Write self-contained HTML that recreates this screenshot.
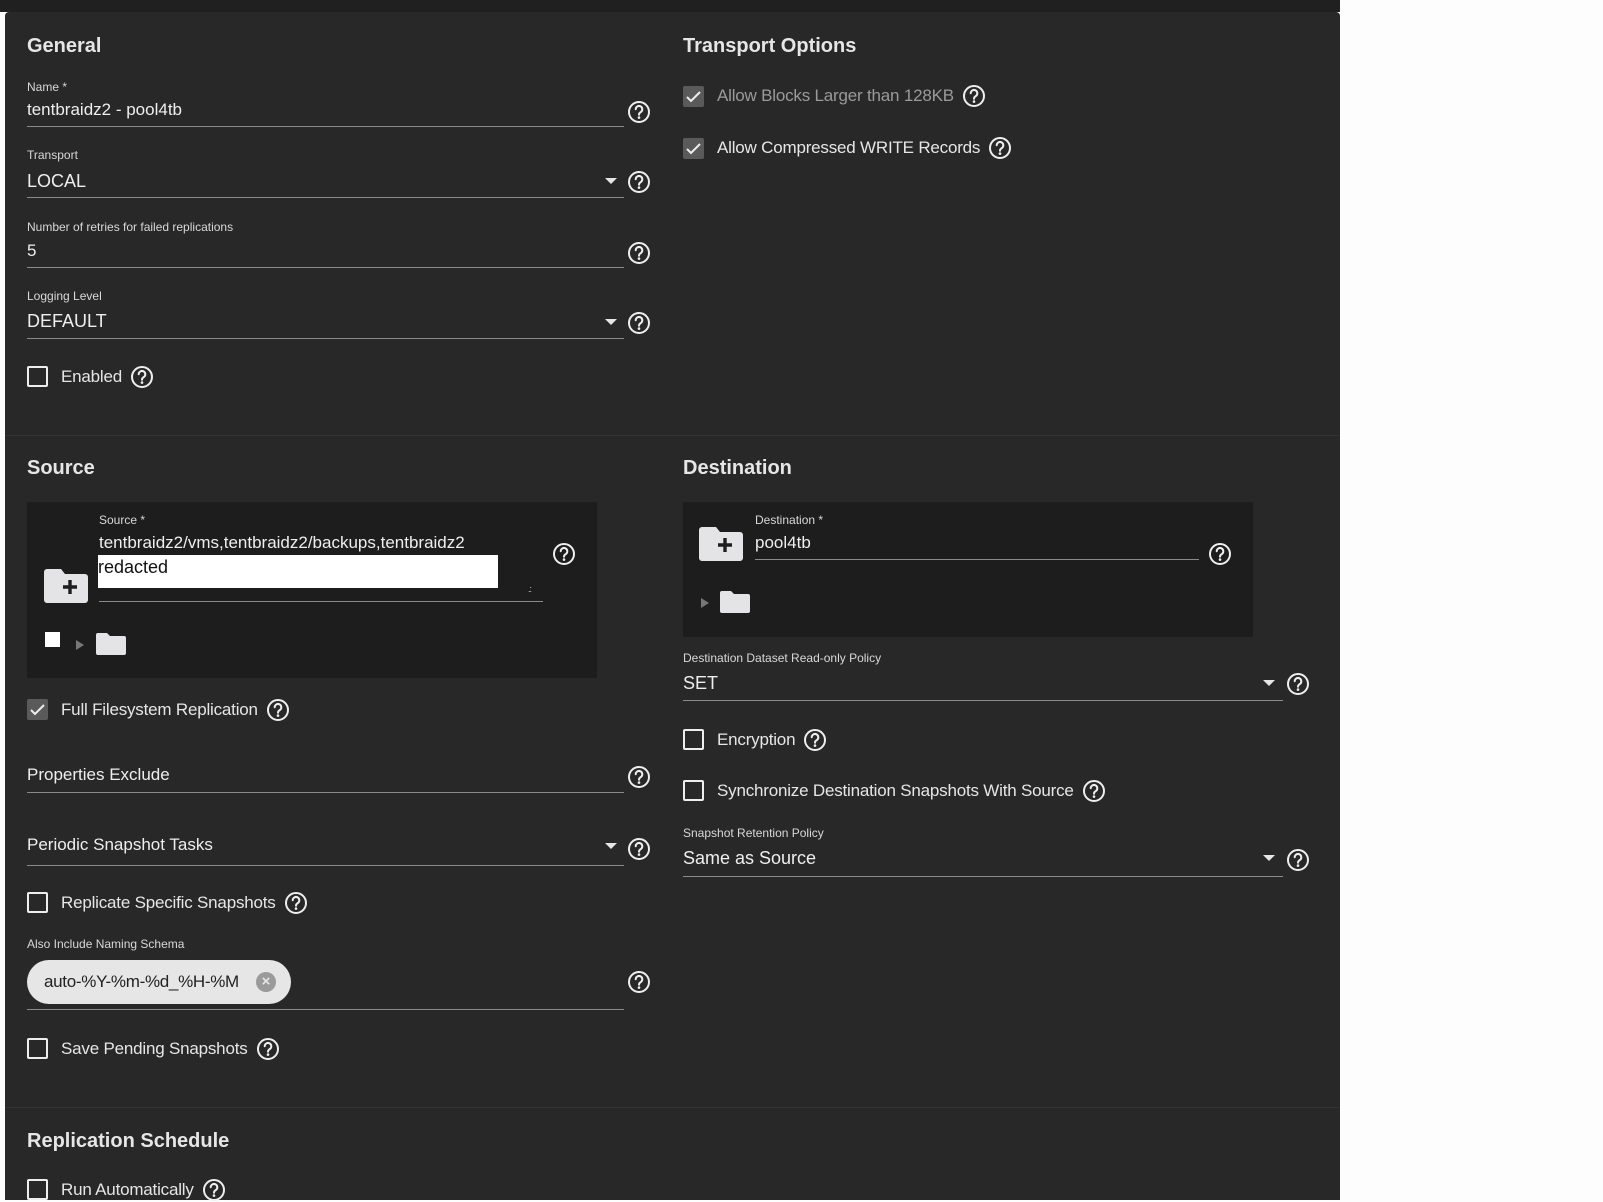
<!DOCTYPE html>
<html><head><meta charset="utf-8"><style>
*{margin:0;padding:0;box-sizing:border-box}
body{width:1603px;height:1200px;background:#fdfdfd;position:relative;overflow:hidden;font-family:"Liberation Sans",sans-serif;color:#e6e6e6}
.top{position:absolute;left:0;top:0;width:1340px;height:12px;background:#202020}
.card{position:absolute;left:5px;top:12px;width:1335px;height:1188px;background:#282828;border-radius:4px 4px 0 0}
.a{position:absolute;white-space:nowrap}
h2{position:absolute;font-size:20px;font-weight:bold;color:#e6e6e6;white-space:nowrap}
.lbl{position:absolute;font-size:12px;color:#d8d8d8;white-space:nowrap}
.val{position:absolute;font-size:17px;color:#eee;white-space:nowrap}
.line{position:absolute;height:1px;background:#8a8a8a}
.hr{position:absolute;height:1px;background:#333;left:5px;width:1335px}
.cb{position:absolute;width:21px;height:21px;border:2px solid #eee;border-radius:2px}
.cbc{position:absolute;width:21px;height:21px;background:#5a5a5a;border-radius:2px}
.cbt{position:absolute;font-size:17px;color:#e6e6e6;white-space:nowrap;display:flex;align-items:center;height:24px;letter-spacing:-0.2px}
.cbt svg{width:24px;height:24px;margin-left:8px}
.tri{position:absolute;width:0;height:0;border-left:6px solid transparent;border-right:6px solid transparent;border-top:6px solid #e6e6e6}
.box{position:absolute;background:#1d1d1d}
.h{position:absolute;width:24px;height:24px}
</style></head><body>
<svg width="0" height="0" style="position:absolute"><defs>
<symbol id="q" viewBox="0 0 24 24"><circle cx="12" cy="12" r="10" fill="none" stroke="#eee" stroke-width="2"/><path d="M8.7 9.3a3.3 3.3 0 1 1 5 2.8c-1 .6-1.7 1.2-1.7 2.6" fill="none" stroke="#eee" stroke-width="2" stroke-linecap="round"/><circle cx="12" cy="17.6" r="1.3" fill="#eee"/></symbol>
<symbol id="ck" viewBox="0 0 21 21"><path d="M4 11l4 4 9-9" fill="none" stroke="#eee" stroke-width="2"/></symbol>
<symbol id="fp" viewBox="0 0 44 34"><path d="M3 0h14l4 5h20a3 3 0 0 1 3 3v23a3 3 0 0 1-3 3H3a3 3 0 0 1-3-3V3a3 3 0 0 1 3-3z" fill="#e4e4e6"/><path d="M26 11v14M19 18h14" stroke="#1d1d1d" stroke-width="3.4"/></symbol>
<symbol id="f" viewBox="0 0 30 22"><path d="M2 0h9l3 3h14a2 2 0 0 1 2 2v15a2 2 0 0 1-2 2H2a2 2 0 0 1-2-2V2a2 2 0 0 1 2-2z" fill="#e4e4e6"/></symbol>
</defs></svg>
<div class="top"></div><div class="card"></div>

<h2 style="left:27px;top:35px">General</h2>
<h2 style="left:683px;top:35px">Transport Options</h2>

<div class="lbl" style="left:27px;top:80px">Name *</div>
<div class="val" style="left:27px;top:100px">tentbraidz2 - pool4tb</div>
<div class="line" style="left:27px;top:126px;width:597px"></div>
<svg class="h" style="left:627px;top:100px"><use href="#q"/></svg>

<div class="lbl" style="left:27px;top:148px">Transport</div>
<div class="val" style="left:27px;top:171px;font-size:18px">LOCAL</div>
<div class="tri" style="left:605px;top:178px"></div>
<div class="line" style="left:27px;top:197px;width:597px"></div>
<svg class="h" style="left:627px;top:170px"><use href="#q"/></svg>

<div class="lbl" style="left:27px;top:220px">Number of retries for failed replications</div>
<div class="val" style="left:27px;top:241px">5</div>
<div class="line" style="left:27px;top:267px;width:597px"></div>
<svg class="h" style="left:627px;top:241px"><use href="#q"/></svg>

<div class="lbl" style="left:27px;top:289px">Logging Level</div>
<div class="val" style="left:27px;top:311px;font-size:18px">DEFAULT</div>
<div class="tri" style="left:605px;top:319px"></div>
<div class="line" style="left:27px;top:338px;width:597px"></div>
<svg class="h" style="left:627px;top:311px"><use href="#q"/></svg>

<div class="cb" style="left:27px;top:366px"></div>
<div class="cbt" style="left:61px;top:365px">Enabled<svg><use href="#q"/></svg></div>

<div class="cbc" style="left:683px;top:86px"></div><svg style="position:absolute;left:683px;top:86px;width:21px;height:21px"><use href="#ck"/></svg>
<div class="cbt" style="left:717px;top:84px;color:#9a9a9a">Allow Blocks Larger than 128KB<svg><use href="#q"/></svg></div>
<div class="cbc" style="left:683px;top:138px"></div><svg style="position:absolute;left:683px;top:138px;width:21px;height:21px"><use href="#ck"/></svg>
<div class="cbt" style="left:717px;top:136px">Allow Compressed WRITE Records<svg><use href="#q"/></svg></div>

<div class="hr" style="top:435px"></div>

<h2 style="left:27px;top:457px">Source</h2>
<h2 style="left:683px;top:457px">Destination</h2>

<div class="box" style="left:27px;top:502px;width:570px;height:176px"></div>
<div class="lbl" style="left:99px;top:513px">Source *</div>
<div class="val" style="left:99px;top:533px">tentbraidz2/vms,tentbraidz2/backups,tentbraidz2</div>
<div class="a" style="left:98px;top:555px;width:400px;height:33px;background:#fff;color:#111;font-size:18px;padding-top:2px">redacted</div>
<div class="line" style="left:99px;top:601px;width:444px"></div>
<div class="a" style="left:528px;top:584px;font-size:9px;color:#ccc;letter-spacing:-1px">.:</div>
<svg class="h" style="left:552px;top:542px"><use href="#q"/></svg>
<svg style="position:absolute;left:44px;top:569px;width:44px;height:34px"><use href="#fp"/></svg>
<div class="a" style="left:45px;top:632px;width:15px;height:15px;background:#fff"></div>
<div class="a" style="left:76px;top:640px;width:0;height:0;border-top:5px solid transparent;border-bottom:5px solid transparent;border-left:8px solid #777"></div>
<svg style="position:absolute;left:96px;top:633px;width:30px;height:22px"><use href="#f"/></svg>

<div class="box" style="left:683px;top:502px;width:570px;height:135px"></div>
<div class="lbl" style="left:755px;top:513px">Destination *</div>
<div class="val" style="left:755px;top:533px">pool4tb</div>
<div class="line" style="left:755px;top:559px;width:444px"></div>
<svg class="h" style="left:1208px;top:542px"><use href="#q"/></svg>
<svg style="position:absolute;left:699px;top:527px;width:44px;height:34px"><use href="#fp"/></svg>
<div class="a" style="left:701px;top:598px;width:0;height:0;border-top:5px solid transparent;border-bottom:5px solid transparent;border-left:8px solid #777"></div>
<svg style="position:absolute;left:720px;top:591px;width:30px;height:22px"><use href="#f"/></svg>

<div class="cbc" style="left:27px;top:699px"></div><svg style="position:absolute;left:27px;top:699px;width:21px;height:21px"><use href="#ck"/></svg>
<div class="cbt" style="left:61px;top:698px">Full Filesystem Replication<svg><use href="#q"/></svg></div>

<div class="val" style="left:27px;top:765px">Properties Exclude</div>
<div class="line" style="left:27px;top:792px;width:597px"></div>
<svg class="h" style="left:627px;top:765px"><use href="#q"/></svg>

<div class="val" style="left:27px;top:835px">Periodic Snapshot Tasks</div>
<div class="tri" style="left:605px;top:843px"></div>
<div class="line" style="left:27px;top:865px;width:597px"></div>
<svg class="h" style="left:627px;top:837px"><use href="#q"/></svg>

<div class="cb" style="left:27px;top:892px"></div>
<div class="cbt" style="left:61px;top:891px">Replicate Specific Snapshots<svg><use href="#q"/></svg></div>

<div class="lbl" style="left:27px;top:937px">Also Include Naming Schema</div>
<div class="a" style="left:27px;top:960px;width:264px;height:44px;border-radius:22px;background:#e6e6e6;color:#222;font-size:17px;letter-spacing:-0.3px;padding:12px 0 0 17px">auto-%Y-%m-%d_%H-%M</div>
<div class="a" style="left:256px;top:972px;width:20px;height:20px;border-radius:50%;background:#9a9a9a;color:#e6e6e6;font-size:15px;line-height:20px;text-align:center;font-weight:bold">×</div>
<div class="line" style="left:27px;top:1009px;width:597px"></div>
<svg class="h" style="left:627px;top:970px"><use href="#q"/></svg>

<div class="cb" style="left:27px;top:1038px"></div>
<div class="cbt" style="left:61px;top:1037px">Save Pending Snapshots<svg><use href="#q"/></svg></div>

<div class="hr" style="top:1107px"></div>
<h2 style="left:27px;top:1130px">Replication Schedule</h2>
<div class="cb" style="left:27px;top:1179px"></div>
<div class="cbt" style="left:61px;top:1178px">Run Automatically<svg><use href="#q"/></svg></div>

<div class="lbl" style="left:683px;top:651px">Destination Dataset Read-only Policy</div>
<div class="val" style="left:683px;top:673px;font-size:18px">SET</div>
<div class="tri" style="left:1263px;top:680px"></div>
<div class="line" style="left:683px;top:700px;width:600px"></div>
<svg class="h" style="left:1286px;top:672px"><use href="#q"/></svg>

<div class="cb" style="left:683px;top:729px"></div>
<div class="cbt" style="left:717px;top:728px">Encryption<svg><use href="#q"/></svg></div>

<div class="cb" style="left:683px;top:780px"></div>
<div class="cbt" style="left:717px;top:779px">Synchronize Destination Snapshots With Source<svg><use href="#q"/></svg></div>

<div class="lbl" style="left:683px;top:826px">Snapshot Retention Policy</div>
<div class="val" style="left:683px;top:848px;font-size:18px">Same as Source</div>
<div class="tri" style="left:1263px;top:855px"></div>
<div class="line" style="left:683px;top:876px;width:600px"></div>
<svg class="h" style="left:1286px;top:848px"><use href="#q"/></svg>
</body></html>
